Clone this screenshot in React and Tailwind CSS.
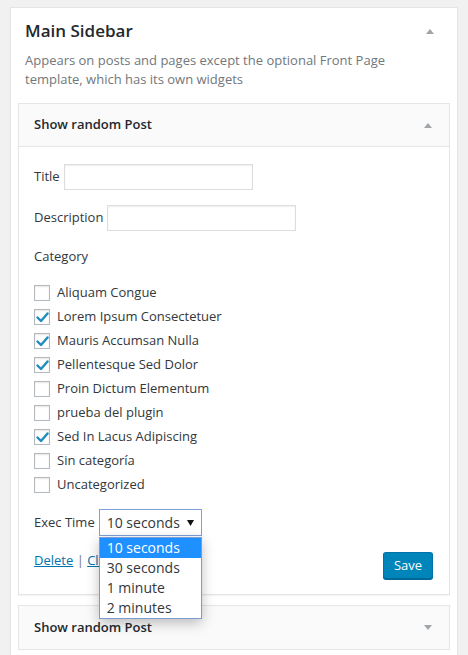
import { useState } from "react";

const categorias = [
  { nombre: "Aliquam Congue", marcado: false },
  { nombre: "Lorem Ipsum Consectetuer", marcado: true },
  { nombre: "Mauris Accumsan Nulla", marcado: true },
  { nombre: "Pellentesque Sed Dolor", marcado: true },
  { nombre: "Proin Dictum Elementum", marcado: false },
  { nombre: "prueba del plugin", marcado: false },
  { nombre: "Sed In Lacus Adipiscing", marcado: true },
  { nombre: "Sin categoría", marcado: false },
  { nombre: "Uncategorized", marcado: false },
];

const tiempos = ["10 seconds", "30 seconds", "1 minute", "2 minutes"];

function Triangle({ down = false }) {
  return (
    <svg width="8" height="5" viewBox="0 0 8 5" className="block">
      {down ? (
        <path d="M0 0 L8 0 L4 5 Z" fill="#a0a5aa" />
      ) : (
        <path d="M0 5 L8 5 L4 0 Z" fill="#a0a5aa" />
      )}
    </svg>
  );
}

function Checkbox({ checked }) {
  return (
    <span className="w-4 h-4 border border-[#b4b9be] bg-white shadow-[inset_0_1px_2px_rgba(0,0,0,0.1)] flex items-center justify-center">
      {checked && (
        <svg width="13" height="11" viewBox="0 0 13 11">
          <path
            d="M1.5 5.5 L5 9 L11.5 1.5"
            fill="none"
            stroke="#1e8cbe"
            strokeWidth="2.4"
            strokeLinecap="round"
            strokeLinejoin="round"
          />
        </svg>
      )}
    </span>
  );
}

function TextInput({ width }) {
  return (
    <input
      type="text"
      className={`${width} h-[26px] border border-[#ddd] bg-white shadow-[inset_0_1px_2px_rgba(0,0,0,0.07)] outline-none`}
    />
  );
}

export default function App() {
  const [seleccion] = useState(0);

  return (
    <div
      className="min-h-screen bg-[#f1f1f1] pt-[7px] px-[10px] text-[13px] text-[#32373c]"
      style={{ fontFamily: "'Open Sans', 'Liberation Sans', sans-serif" }}
    >
      <div className="w-[448px] bg-white border border-[#e5e5e5] shadow-[0_1px_1px_rgba(0,0,0,0.04)] pb-[20px]">
        {/* cabecera sidebar */}
        <div className="pt-[11px] pl-[14px] pr-[23px] flex items-center justify-between">
          <h2 className="text-[17px] leading-[24px] font-semibold text-[#23282d]">
            Main Sidebar
          </h2>
          <Triangle />
        </div>
        <p className="mt-[8px] pl-[14px] pr-[20px] text-[13px] leading-[19px] text-[#72777c]">
          Appears on posts and pages except the optional Front Page template,
          which has its own widgets
        </p>

        {/* widget abierto */}
        <div className="mt-[14px] mx-[7px] border border-[#e5e5e5] shadow-[0_1px_1px_rgba(0,0,0,0.04)]">
          <div className="h-[43px] bg-[#fafafa] border-b border-[#e5e5e5] pl-[15px] pr-[17px] flex items-center justify-between">
            <h3 className="font-semibold text-[13px] text-[#23282d]">
              Show random Post
            </h3>
            <Triangle />
          </div>

          <div className="pt-[17px] pb-[15px] px-[15px] bg-white">
            <div className="flex items-center gap-[4px]">
              <label>Title</label>
              <TextInput width="w-[189px]" />
            </div>
            <div className="mt-[15px] flex items-center gap-[4px]">
              <label>Description</label>
              <TextInput width="w-[189px]" />
            </div>
            <p className="mt-[15px] leading-[20px]">Category</p>

            <ul className="mt-[15px]">
              {categorias.map((c) => (
                <li key={c.nombre} className="h-[24px] flex items-center gap-[7px]">
                  <Checkbox checked={c.marcado} />
                  <span>{c.nombre}</span>
                </li>
              ))}
            </ul>

            <div className="mt-[12px] flex items-center gap-[4px]">
              <label>Exec Time</label>
              <div className="relative">
                <div className="w-[103px] h-[27px] border border-[#7ba1d8] bg-white pl-[7px] pr-[7px] flex items-center justify-between text-[14px] text-[#32373c]">
                  <span>{tiempos[seleccion]}</span>
                  <svg width="7" height="6" viewBox="0 0 7 6">
                    <path d="M0 0 L7 0 L3.5 6 Z" fill="#111" />
                  </svg>
                </div>

                {/* lista desplegada */}
                <ul className="absolute left-0 top-[28px] w-[103px] border border-[#7a9cd3] bg-white shadow-[0_4px_12px_rgba(0,0,0,0.25)] z-10 text-[14px]">
                  {tiempos.map((t, i) => (
                    <li
                      key={t}
                      className={`h-[20px] leading-[20px] pl-[7px] ${
                        i === seleccion ? "bg-[#1e90ff] text-white" : "text-[#32373c]"
                      }`}
                    >
                      {t}
                    </li>
                  ))}
                </ul>
              </div>
            </div>

            <div className="mt-[14px] flex items-start justify-between">
              <div className="leading-[20px]">
                <a className="text-[#0073aa] underline">Delete</a>
                <span className="text-[#72777c]"> | </span>
                <a className="text-[#0073aa] underline">Close</a>
              </div>
              <button className="mt-[2px] mr-[1px] w-[50px] h-[27px] rounded-[3px] bg-[#0085ba] border border-[#0073aa] border-b-[#006799] shadow-[0_1px_0_#006799] text-white text-[13px]">
                Save
              </button>
            </div>
          </div>
        </div>

        {/* widget cerrado */}
        <div className="mt-[10px] mx-[7px] h-[45px] border border-[#e5e5e5] bg-[#fafafa] pl-[15px] pr-[17px] flex items-center justify-between">
          <h3 className="font-semibold text-[13px] text-[#23282d]">
            Show random Post
          </h3>
          <Triangle down />
        </div>
      </div>
    </div>
  );
}
